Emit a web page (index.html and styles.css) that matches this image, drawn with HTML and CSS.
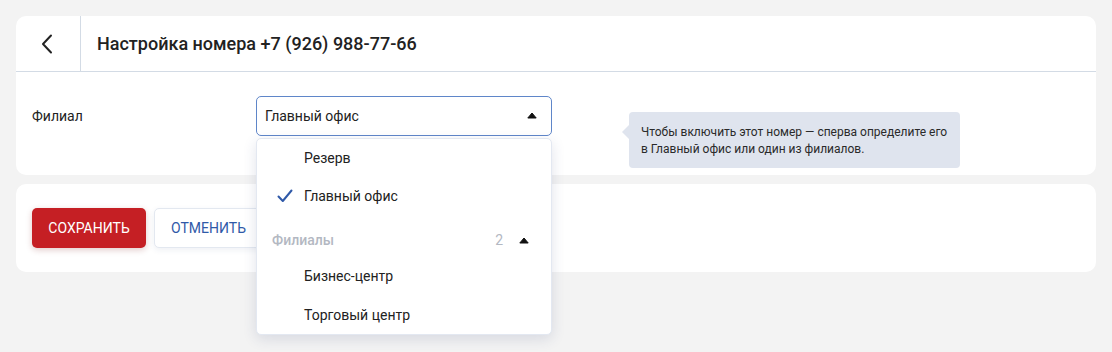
FILE: index.html
```html
<!DOCTYPE html>
<html lang="ru">
<head>
<meta charset="utf-8">
<link rel="stylesheet" href="styles.css">
</head>
<body>
<div class="page">
  <section class="card card-main">
    <header class="head">
      <div class="back">
        <svg width="12" height="20" viewBox="0 0 12 20"><path d="M10 1.5 L2 10 L10 18.5" fill="none" stroke="#222" stroke-width="2" stroke-linecap="round" stroke-linejoin="round"/></svg>
      </div>
      <h1 class="title">Настройка номера +7 (926) 988-77-66</h1>
    </header>
    <div class="body">
      <div class="label">Филиал</div>
      <div class="select-wrap">
        <div class="select">
          <span>Главный офис</span>
          <svg class="caret" width="10" height="7" viewBox="0 0 10 7"><path d="M5 1 L9.2 6 H0.8 Z" fill="#111" stroke="#111" stroke-width="1" stroke-linejoin="round"/></svg>
        </div>
        <ul class="menu">
          <li class="item item-top">Резерв</li>
          <li class="item item-top selected">
            <svg class="check" width="16" height="14" viewBox="0 0 16 14"><path d="M1.5 7.5 L5.8 12 L14.5 1.5" fill="none" stroke="#2f59a8" stroke-width="2" stroke-linecap="round" stroke-linejoin="round"/></svg>
            Главный офис
          </li>
          <li class="group">
            <span class="group-name">Филиалы</span>
            <span class="group-count">2</span>
            <svg class="caret" width="10" height="7" viewBox="0 0 10 7"><path d="M5 1 L9.2 6 H0.8 Z" fill="#111" stroke="#111" stroke-width="1" stroke-linejoin="round"/></svg>
          </li>
          <li class="item">Бизнес-центр</li>
          <li class="item">Торговый центр</li>
        </ul>
      </div>
      <div class="tip">Чтобы включить этот номер — сперва определите его в Главный офис или один из филиалов.</div>
    </div>
  </section>
  <section class="card card-actions">
    <button class="btn btn-save">Сохранить</button>
    <button class="btn btn-cancel">Отменить</button>
  </section>
</div>
</body>
</html>
```

FILE: styles.css
```css
* { box-sizing: border-box; }
html, body { margin: 0; padding: 0; }
body {
  background: #f3f3f3;
  font-family: Roboto, "Liberation Sans", sans-serif;
  color: #222;
  width: 1112px;
  height: 352px;
  overflow: hidden;
}
.page {
  padding: 16px;
  display: flex;
  flex-direction: column;
  gap: 9px;
}
.card {
  background: #fff;
  border-radius: 10px;
}
.card-main { height: 159px; }
.head {
  display: flex;
  height: 56px;
  border-bottom: 1px solid #d3dbe5;
}
.back {
  width: 65px;
  border-right: 1px solid #d3dbe5;
  display: flex;
  align-items: center;
  justify-content: center;
  padding-right: 2px;
}
.title {
  margin: 0;
  padding-left: 16px;
  font-size: 18px;
  font-weight: 500;
  line-height: 55px;
  color: #222;
}
.body {
  display: flex;
  align-items: flex-start;
  padding: 24px 16px 0 16px;
  position: relative;
}
.label {
  width: 224px;
  font-size: 14px;
  line-height: 40px;
}
.select-wrap {
  position: relative;
  width: 296px;
  z-index: 5;
}
.select {
  height: 40px;
  border: 1px solid #5f86c9;
  border-radius: 5px;
  display: flex;
  align-items: center;
  justify-content: space-between;
  padding: 0 14px 0 8px;
  font-size: 14px;
  color: #222;
}
.select .caret { margin-top: -2px; }
.menu {
  position: absolute;
  left: 0;
  top: 42px;
  width: 296px;
  margin: 0;
  padding: 0;
  list-style: none;
  background: #fff;
  border: 1px solid #e3e8f1;
  border-radius: 5px;
  box-shadow: 0 4px 14px rgba(40, 60, 110, 0.14);
}
.item {
  height: 39px;
  display: flex;
  align-items: center;
  padding-left: 47px;
  font-size: 14px;
  color: #222;
  position: relative;
}
.item-top { height: 38px; }
.item .check {
  position: absolute;
  left: 20px;
  top: 12px;
}
.group {
  height: 32px;
  margin-top: 9px;
  display: flex;
  align-items: center;
  padding: 0 22px 0 15px;
  font-size: 14px;
}
.group-name {
  flex: 1;
  color: #b3b8c2;
  font-weight: 500;
}
.group-count {
  color: #b3b8c2;
  margin-right: 16px;
}
.tip {
  position: absolute;
  left: 613px;
  top: 40px;
  width: 331px;
  height: 56px;
  background: #dfe4ee;
  border-radius: 4px;
  padding: 12px 12px;
  font-size: 12px;
  line-height: 17px;
  color: #2a2a2a;
}
.tip::before {
  content: "";
  position: absolute;
  left: -7px;
  top: 13px;
  border-top: 7px solid transparent;
  border-bottom: 7px solid transparent;
  border-right: 7px solid #dfe4ee;
}
.card-actions {
  height: 88px;
  display: flex;
  align-items: flex-start;
  gap: 8px;
  padding: 24px 16px;
}
.btn {
  height: 40px;
  border-radius: 5px;
  font-family: Roboto, "Liberation Sans", sans-serif;
  font-size: 14px;
  text-transform: uppercase;
  padding: 0 16px;
  cursor: pointer;
}
.btn-save {
  width: 114px;
  background: #c51f24;
  color: #fff;
  border: none;
  box-shadow: 0 2px 6px rgba(120, 20, 20, 0.22);
}
.btn-cancel {
  background: #fff;
  color: #2f59a8;
  border: 1px solid #e3e8f0;
  box-shadow: 0 2px 6px rgba(40, 60, 110, 0.08);
}
```
